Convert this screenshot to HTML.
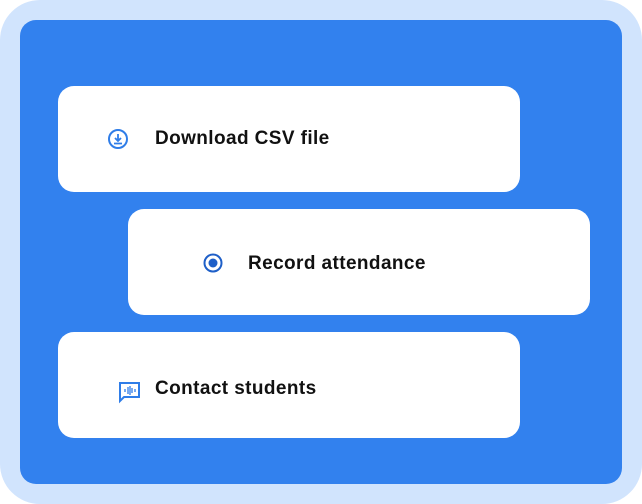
<!DOCTYPE html><html><head><style>
body{margin:0;width:642px;height:504px;background:#fff;position:relative;overflow:hidden;font-family:"Liberation Sans",sans-serif}
.o{position:absolute;left:0;top:0;width:642px;height:504px;background:#d1e4fd;border-radius:40px}
.i{position:absolute;left:20px;top:20px;width:602px;height:464px;background:#3281ee;border-radius:16px}
.c{position:absolute;width:462px;height:106px;background:#fff;border-radius:16px}
.t{position:absolute;font-size:19px;font-weight:bold;color:#111;letter-spacing:0.4px}
svg{position:absolute}
</style></head><body>
<div class="o"></div><div class="i"></div>
<div class="c" style="left:58px;top:86px"></div>
<div class="c" style="left:128px;top:209px"></div>
<div class="c" style="left:58px;top:332px"></div>
<svg style="left:107px;top:128px" width="22" height="22" viewBox="0 0 22 22"><circle cx="11" cy="11" r="9" fill="none" stroke="#2f7de8" stroke-width="2"/><path d="M11 6v7M8 10l3 3 3-3M7 15.5h8" fill="none" stroke="#2f7de8" stroke-width="1.8"/></svg>
<div class="t" style="left:155px;top:128px">Download CSV file</div>
<svg style="left:202px;top:252px" width="22" height="22" viewBox="0 0 22 22"><circle cx="11" cy="11" r="8.5" fill="none" stroke="#1e5fc8" stroke-width="2"/><circle cx="11" cy="11" r="4.5" fill="#1e5fc8"/></svg>
<div class="t" style="left:248px;top:253px">Record attendance</div>
<svg style="left:119px;top:382px" width="22" height="22" viewBox="0 0 22 22"><path d="M1 1h19v14H5l-4 4z" fill="none" stroke="#2f7de8" stroke-width="2"/><path d="M6 7v3M9 5v7M11 4v9M13 6v5M16 7v3" stroke="#2f7de8" stroke-width="1.3"/></svg>
<div class="t" style="left:155px;top:378px">Contact students</div>
</body></html>
